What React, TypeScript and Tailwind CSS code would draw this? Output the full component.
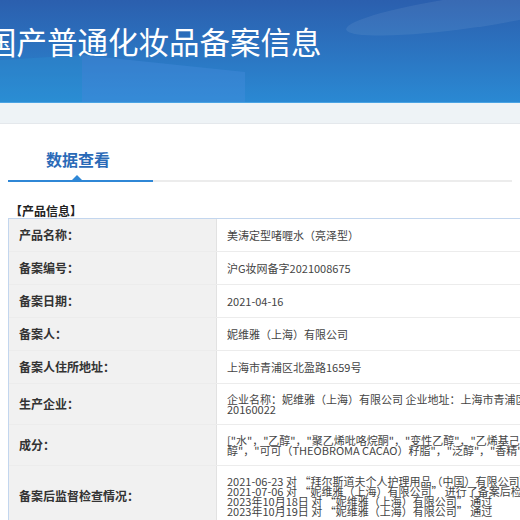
const rows: { label: string; lines: string[] }[] = [
  { label: "产品名称：", lines: ["美涛定型啫喱水（亮泽型）"] },
  { label: "备案编号：", lines: ["沪G妆网备字2021008675"] },
  { label: "备案日期：", lines: ["2021-04-16"] },
  { label: "备案人：", lines: ["妮维雅（上海）有限公司"] },
  { label: "备案人住所地址：", lines: ["上海市青浦区北盈路1659号"] },
  {
    label: "生产企业：",
    lines: [
      "企业名称：妮维雅（上海）有限公司 企业地址：上海市青浦区北盈路1659号 生产许可证号：沪妆",
      "20160022",
    ],
  },
  {
    label: "成分：",
    lines: [
      "[\"水\"，\"乙醇\"，\"聚乙烯吡咯烷酮\"，\"变性乙醇\"，\"乙烯基己内酰胺/VP/甲基丙烯酸二甲氨基乙酯共聚物\"，\"PEG-40氢化蓖麻油\"，\"苯氧乙",
      "醇\"，\"可可（THEOBROMA CACAO）籽脂\"，\"泛醇\"，\"香精\"]",
    ],
  },
  {
    label: "备案后监督检查情况：",
    lines: [
      "2021-06-23 对 “拜尔斯道夫个人护理用品（中国）有限公司” 进行了备案后检查，结果：通过",
      "2021-07-06 对 “妮维雅（上海）有限公司” 进行了备案后检查，结果：通过",
      "2023年10月18日 对 “妮维雅（上海）有限公司” 通过",
      "2023年10月19日 对 “妮维雅（上海）有限公司” 通过",
    ],
  },
];

export default function App() {
  return (
    <div
      className="w-[520px] h-[520px] overflow-hidden bg-white text-[#333]"
      style={{ fontFamily: '"Noto Sans CJK SC", "Noto Sans", sans-serif' }}
    >
      {/* Banner */}
      <header className="relative h-[103px] overflow-hidden bg-gradient-to-b from-[#2b5fae] to-[#2a89d3] border-b border-[#4aa3e3]">
        <svg className="absolute inset-0" width="520" height="103" viewBox="0 0 520 103">
          <polygon points="82,55 245,72 245,103 82,103" fill="#4b8fe0" opacity="0.35" />
          <polygon points="0,60 82,55 82,103 0,103" fill="#2a9ad8" opacity="0.25" />
          <ellipse cx="470" cy="12" rx="125" ry="16" fill="#ffffff" opacity="0.07" transform="rotate(-8 470 12)" />
        </svg>
        <h1 className="relative ml-[-14px] pt-[22px] text-[30.5px] leading-[38px] text-white whitespace-nowrap">
          国产普通化妆品备案信息
        </h1>
      </header>
      <div className="h-[21px] bg-[#eef3f6] border-b border-[#e4e8ec]" />

      {/* Tab */}
      <div className="px-2 pt-[25px]">
        <div className="pl-[38px] text-[16px] leading-[20px] font-bold text-[#2a6ab7]">数据查看</div>
        <div className="relative mt-[11px] flex h-[2px]">
          <div className="w-[145px] bg-[#2f87d6]" />
          <div className="flex-1 bg-[#ececec]" />
          <div className="absolute left-[64px] top-[-5px] h-0 w-0 border-x-[5px] border-b-[5px] border-x-transparent border-b-[#2f87d6]" />
        </div>
      </div>

      {/* Product info */}
      <div className="pl-2 pt-[22px]">
        <div className="pl-[2px] text-[12px] leading-[14px] font-bold text-[#222]">【产品信息】</div>
        <div className="w-[900px] border-l border-t border-[#c3d6ee]">
          {rows.map((row) => (
            <div key={row.label} className="flex border-b border-[#ececec]">
              <div className="flex w-[208px] shrink-0 items-center border-r border-[#e2e2e2] bg-[#f1f1f1] py-[10px] pl-[10px] text-[12px] leading-[12px] font-bold text-[#333]">
                {row.label}
              </div>
              <div className="flex flex-col justify-center py-[10px] pl-[10px] text-[11px] leading-[10px] text-[#444] whitespace-nowrap">
                {row.lines.map((line, i) => (
                  <div key={i}>{line}</div>
                ))}
              </div>
            </div>
          ))}
        </div>
      </div>
    </div>
  );
}
